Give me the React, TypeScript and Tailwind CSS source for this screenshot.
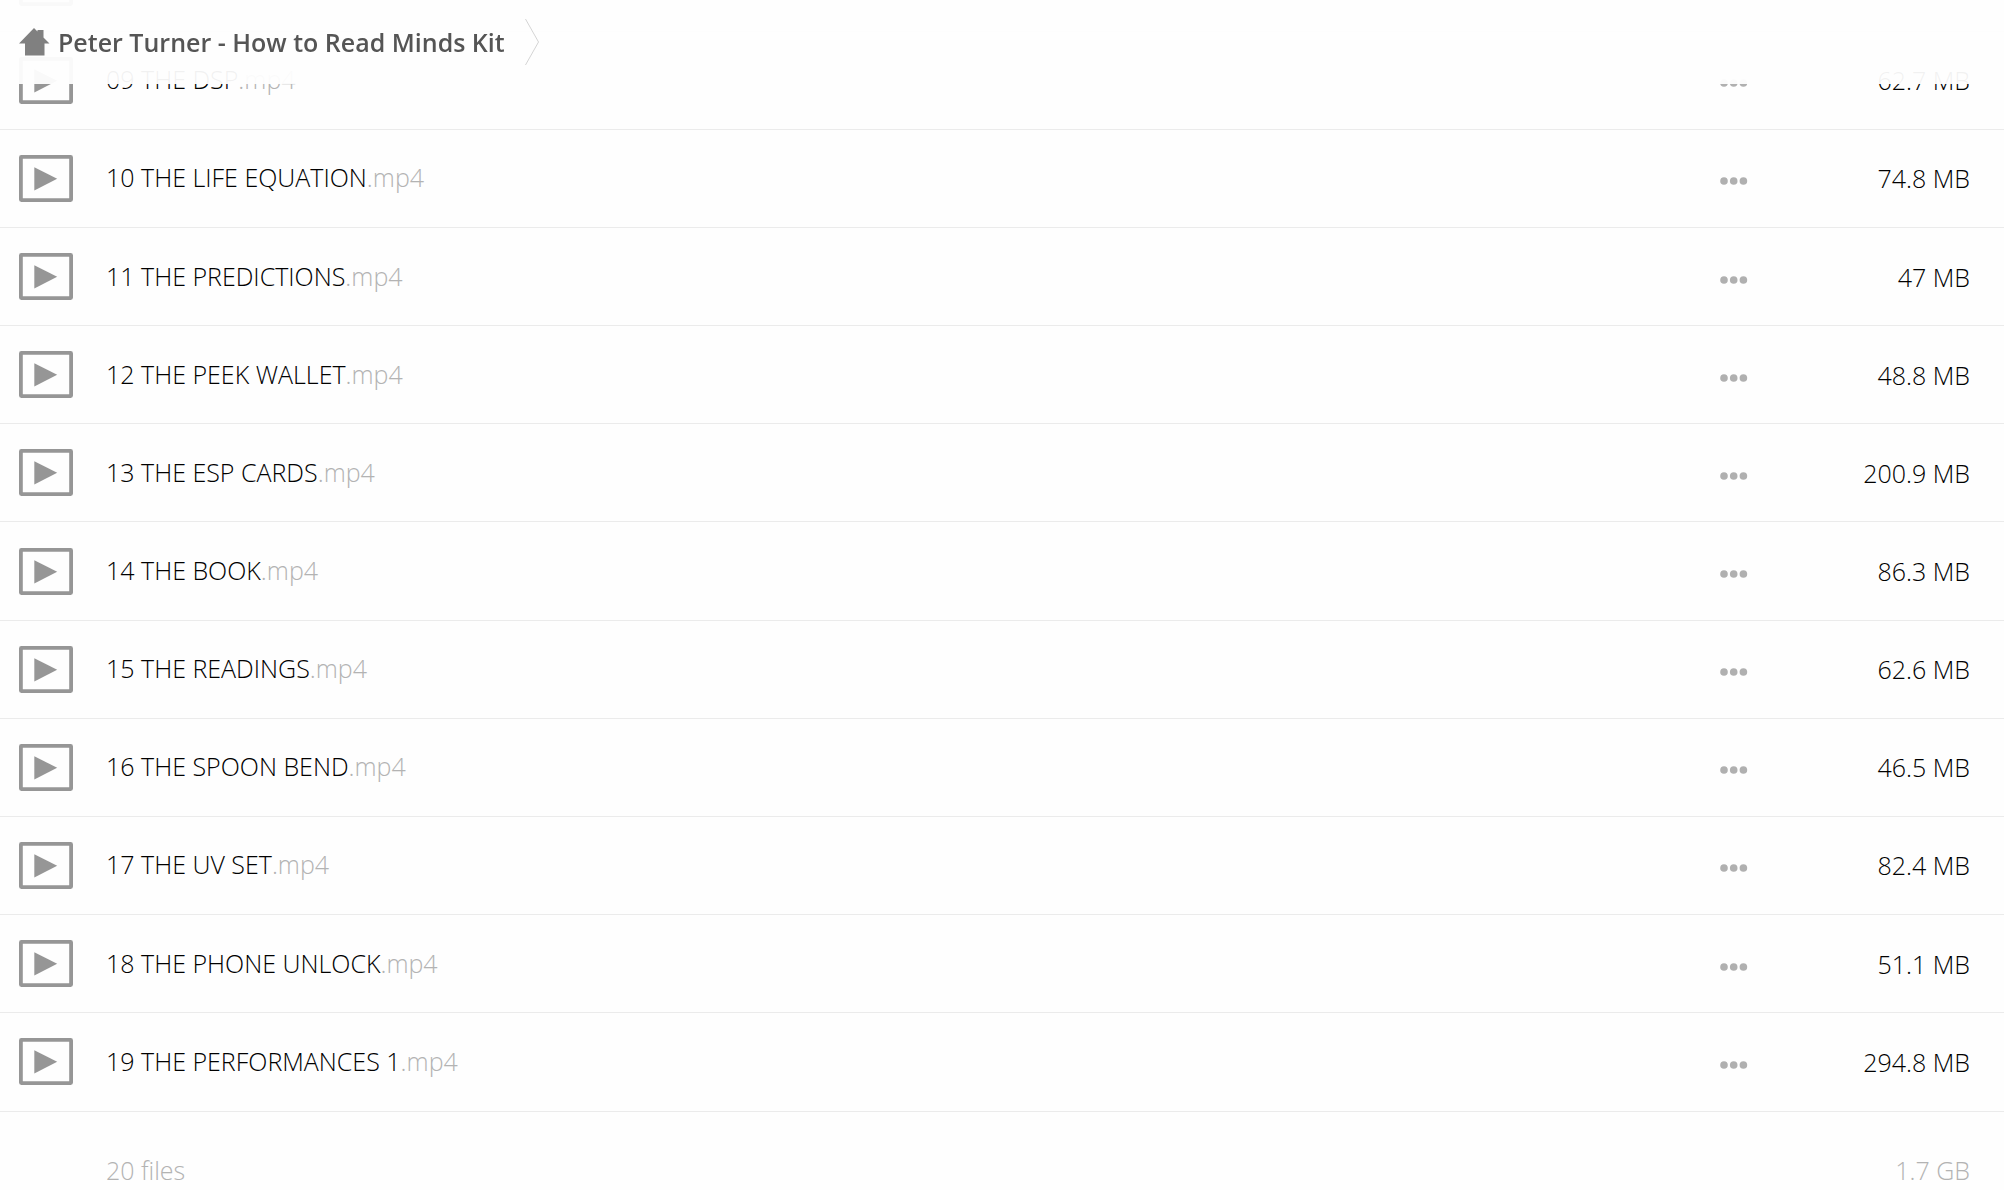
import React from 'react';

interface FileEntry {
    name: string;
    size: string;
}

const files: FileEntry[] = [
    { name: '09 THE DSP', size: '62.7 MB' },
    { name: '10 THE LIFE EQUATION', size: '74.8 MB' },
    { name: '11 THE PREDICTIONS', size: '47 MB' },
    { name: '12 THE PEEK WALLET', size: '48.8 MB' },
    { name: '13 THE ESP CARDS', size: '200.9 MB' },
    { name: '14 THE BOOK', size: '86.3 MB' },
    { name: '15 THE READINGS', size: '62.6 MB' },
    { name: '16 THE SPOON BEND', size: '46.5 MB' },
    { name: '17 THE UV SET', size: '82.4 MB' },
    { name: '18 THE PHONE UNLOCK', size: '51.1 MB' },
    { name: '19 THE PERFORMANCES 1', size: '294.8 MB' },
];

const HomeIcon: React.FC = () => (
    <svg width="31" height="28" viewBox="0 0 31 28" fill="#808080">
        <path d="M0 15.5 15 0l3.5 3.5V2h6v7.5l6 6H25.500V27.500H6V15.500Z" />
    </svg>
);

const VideoIcon: React.FC = () => (
    <svg width="54" height="47" viewBox="0 0 54 47" className="block">
        <rect
            x="1.900"
            y="1.900"
            width="50.200"
            height="43.200"
            rx="0.500"
            fill="none"
            stroke="#969696"
            strokeWidth="3.800"
            strokeLinejoin="round"
        />
        <path d="M15.300 12.200v23.200L38.200 23.800Z" fill="#969696" />
    </svg>
);

const DotsIcon: React.FC = () => (
    <svg width="28" height="8" viewBox="0 0 28 8" fill="#b0b0b0">
        <circle cx="4" cy="4" r="3.800" />
        <circle cx="13.700" cy="4" r="3.800" />
        <circle cx="23.400" cy="4" r="3.800" />
    </svg>
);

const FileRow: React.FC<FileEntry> = ({ name, size }) => (
    <tr className="border-b border-[#ebebeb]">
        <td className="w-[106px] pl-[19px]">
            <VideoIcon />
        </td>
        <td className="pb-0.5">
            <a href="#" className="text-black">
                {name}
                <span className="text-[#b3b3b3]">.mp4</span>
            </a>
        </td>
        <td className="w-[70px]">
            <button
                type="button"
                aria-label="More"
                className="flex h-10 items-end pb-[13px]"
            >
                <DotsIcon />
            </button>
        </td>
        <td className="w-[214px] pr-[34px] text-right">{size}</td>
    </tr>
);

const Breadcrumb: React.FC = () => (
    <header className="fixed inset-x-0 top-0 flex h-21 items-center bg-[#fefefe]/95 pl-[19px]">
        <a href="#" className="flex items-center font-semibold text-[#555]">
            <HomeIcon />
            <span className="ml-2">Peter Turner - How to Read Minds Kit</span>
        </a>
        <svg
            width="15"
            height="48"
            viewBox="0 0 15 48"
            fill="none"
            stroke="#d4d4d4"
            className="ml-5"
        >
            <path d="M0.500 1 13.500 24 0.500 47" />
        </svg>
    </header>
);

export default function App() {
    return (
        <div className="flex h-screen flex-col justify-end overflow-hidden bg-[#fefefe] font-['Open_Sans',sans-serif] text-[25px] leading-10 font-light text-black">
            <Breadcrumb />
            <table className="h-[calc(100vh+66px)] w-full shrink-0 border-collapse">
                <tbody>
                    {/* row scrolled under the header, only its icon edge shows */}
                    <tr className="border-b border-[#ebebeb]">
                        <td colSpan={4} className="pl-[19px]">
                            <VideoIcon />
                        </td>
                    </tr>
                    {files.map((file) => (
                        <FileRow key={file.name} {...file} />
                    ))}
                </tbody>
                <tfoot className="text-[#b3b3b3]">
                    <tr className="h-[79px] align-bottom">
                        <td />
                        <td>20 files</td>
                        <td />
                        <td className="pr-[34px] text-right">1.7 GB</td>
                    </tr>
                </tfoot>
            </table>
        </div>
    );
}
